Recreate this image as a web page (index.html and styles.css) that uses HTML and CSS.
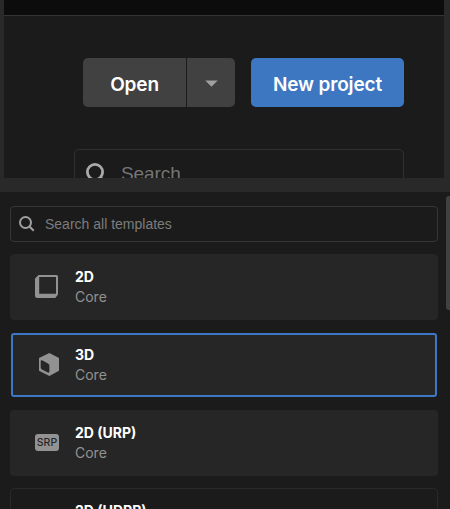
FILE: index.html
```html
<!DOCTYPE html>
<html lang="en">
<head>
<meta charset="utf-8">
<title>Projects</title>
<link rel="stylesheet" href="styles.css">
</head>
<body>
<section class="projects">
  <div class="titlebar"></div>
  <div class="actions">
    <div class="split">
      <button class="btn open"><span>Open</span></button>
      <button class="btn more" aria-label="More"><svg width="13" height="7" viewBox="0 0 13 7"><path d="M.3.5h12.4L6.5 6.8z" fill="#a0a0a0"/></svg></button>
    </div>
    <button class="btn primary"><span>New project</span></button>
  </div>
  <div class="search large">
    <svg width="24" height="24" viewBox="0 0 24 24" fill="none" stroke="#a9a9a9" stroke-width="2.8"><circle cx="9" cy="10" r="7.6"/><path d="M14.5 15.5l6 6"/></svg>
    <span>Search</span>
  </div>
</section>
<section class="templates">
  <div class="search">
    <svg width="17" height="17" viewBox="0 0 17 17" fill="none" stroke="#a0a0a0" stroke-width="2"><circle cx="6.5" cy="6.5" r="5.5"/><path d="M10.5 10.5l4.2 4.2"/></svg>
    <span>Search all templates</span>
  </div>
  <div class="card">
    <svg class="icon" width="24" height="24" viewBox="0 0 24 24"><path fill="#929292" fill-rule="evenodd" d="M3.5 0H21.5Q23 0 23 1.5V19.5L20.3 23H2.5Q0 23 0 20.5V3.4zM4.2 2V18.8H21V2z"/></svg>
    <div><h2>2D</h2><p>Core</p></div>
  </div>
  <div class="card selected">
    <svg class="icon cube" width="24" height="24" viewBox="0 0 24 24"><path fill="#929292" fill-rule="evenodd" d="M14.4 0L24 4.9V17.7L14.4 23 4 17.7V4.9zM5.7 8.5V14.8Q5.9 16 7 16.6L12.8 19.5Q14.4 20 14.4 18.5V12.7Q14.4 11.3 13 10.5L7.5 7.6Q5.7 6.8 5.7 8.5z"/></svg>
    <div><h2>3D</h2><p>Core</p></div>
  </div>
  <div class="card">
    <div class="icon srp">SRP</div>
    <div><h2>2D (URP)</h2><p>Core</p></div>
  </div>
  <div class="card outline">
    <div class="icon"></div>
    <div><h2>2D (HDRP)</h2><p>Core</p></div>
  </div>
  <div class="scroll"></div>
</section>
</body>
</html>
```
FILE: styles.css
```css
* { box-sizing: border-box; }
body {
  margin: 0;
  width: 450px;
  height: 509px;
  overflow: hidden;
  background: #292929;
  font-family: Inter, sans-serif;
  color: #fff;
}
.projects {
  margin: 0 6px 14px 4px;
  height: 178px;
  overflow: hidden;
  background: #1b1b1b;
}
.titlebar {
  height: 16px;
  background: #0c0c0c;
  border-bottom: 1px solid #343434;
}
.actions {
  display: flex;
  gap: 16px;
  padding: 42px 0 0 79px;
}
.split { display: flex; gap: 1px; }
.btn {
  display: flex;
  align-items: center;
  justify-content: center;
  height: 49px;
  padding: 3px 0 0;
  border: 0;
  background: #414141;
  color: #fff;
  font: 600 19px Inter, sans-serif;
  letter-spacing: -0.15px;
}
.open { width: 103px; border-radius: 5px 0 0 5px; }
.more { width: 48px; padding-top: 1px; border-radius: 0 5px 5px 0; }
.primary { width: 153px; border-radius: 5px; background: #3d76c1; }
.search {
  display: flex;
  align-items: center;
  height: 36px;
  padding-left: 8px;
  border: 1px solid #363636;
  border-radius: 4px;
  gap: 9px;
  color: #7c7c7c;
  font: 14px "Liberation Sans", Arial, sans-serif;
}
.large {
  width: 330px;
  height: 49px;
  margin: 42px 0 0 70px;
  padding-left: 11px;
  gap: 11px;
  border-color: #303030;
  border-radius: 5px;
  color: #757575;
  font-size: 19px;
  letter-spacing: -0.1px;
}
.templates {
  position: relative;
  height: 317px;
  padding: 14px 12px 0 10px;
  overflow: hidden;
  background: #1b1b1b;
}
.card {
  display: flex;
  align-items: center;
  height: 66px;
  margin-top: 12px;
  padding-left: 25px;
  gap: 16px;
  border-radius: 4px;
  background: #262626;
}
.icon { width: 24px; flex: none; }
.selected {
  height: 64px;
  margin: 13px 1px;
  padding-left: 22px;
  border: 2px solid #3c78c5;
  border-radius: 3px;
}
.outline { background: none; border: 1px solid #292929; padding-left: 24px; }
.srp {
  height: 17px;
  margin-bottom: 1px;
  border-radius: 3px;
  background: #929292;
  color: #262626;
  font-size: 10.5px;
  font-weight: 500;
  line-height: 17px;
  text-align: center;
}
h2, p { margin: 0; font-size: 14px; line-height: 20px; }
h2 { font-weight: 700; }
p { color: #929292; }
.scroll {
  position: absolute;
  top: 4px;
  right: 0;
  width: 4px;
  height: 114px;
  border-radius: 3px 0 0 3px;
  background: #414141;
}
```
